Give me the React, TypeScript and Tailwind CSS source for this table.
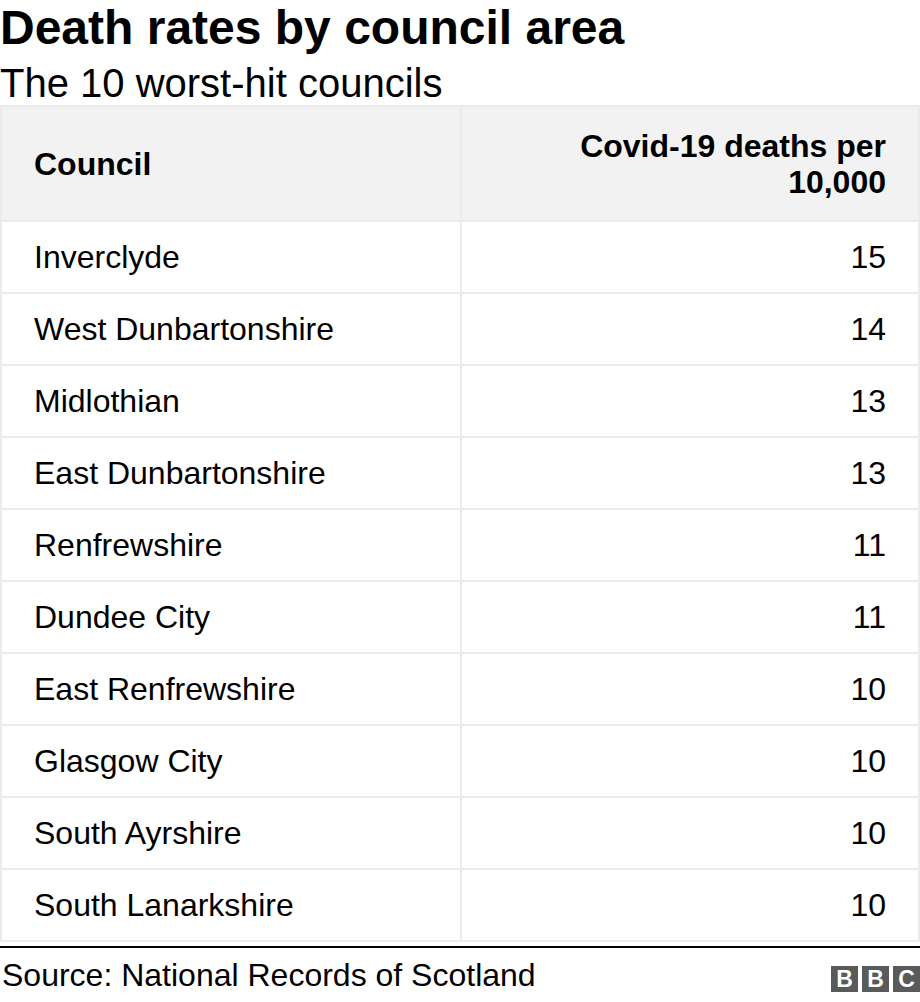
const rows = [
  { council: "Inverclyde", rate: 15 },
  { council: "West Dunbartonshire", rate: 14 },
  { council: "Midlothian", rate: 13 },
  { council: "East Dunbartonshire", rate: 13 },
  { council: "Renfrewshire", rate: 11 },
  { council: "Dundee City", rate: 11 },
  { council: "East Renfrewshire", rate: 10 },
  { council: "Glasgow City", rate: 10 },
  { council: "South Ayrshire", rate: 10 },
  { council: "South Lanarkshire", rate: 10 },
];

function BbcLogo() {
  return (
    <div className="mt-[10px] flex gap-[4px]">
      {["B", "B", "C"].map((letter, i) => (
        <div
          key={i}
          className="flex h-[26px] w-[27px] items-center justify-center bg-[#5a5a5a] text-[23px] font-bold leading-none text-white"
        >
          {letter}
        </div>
      ))}
    </div>
  );
}

export default function App() {
  return (
    <div className="w-[920px] bg-white text-black font-['Liberation_Sans',Arial,sans-serif]">
      {/* Heading */}
      <h1 className="text-[48px] font-bold leading-[56px]">Death rates by council area</h1>
      <p className="mt-[5px] text-[40px] leading-[44px]">The 10 worst-hit councils</p>

      {/* Table */}
      <div className="border-l-2 border-t-2 border-[#ebebeb]">
        <div className="grid grid-cols-[460px_458px] bg-[#f2f2f2] text-[32px] font-bold leading-[36px]">
          <div className="flex h-[115px] items-center border-b-2 border-r-2 border-[#ebebeb] px-8">Council</div>
          <div className="flex h-[115px] items-center justify-end border-b-2 border-r-2 border-[#ebebeb] px-8 text-right">
            Covid-19 deaths per 10,000
          </div>
        </div>
        {rows.map((row) => (
          <div key={row.council} className="grid grid-cols-[460px_458px] text-[32px] leading-[38px]">
            <div className="flex h-[72px] items-center border-b-2 border-r-2 border-[#ebebeb] px-8">{row.council}</div>
            <div className="flex h-[72px] items-center justify-end border-b-2 border-r-2 border-[#ebebeb] px-8">
              {row.rate}
            </div>
          </div>
        ))}
      </div>

      {/* Footer */}
      <div className="mt-[4px] flex items-start justify-between border-t-2 border-black pt-[8px]">
        <p className="pl-[2px] text-[32px] leading-[38px]">Source: National Records of Scotland</p>
        <BbcLogo />
      </div>
    </div>
  );
}
